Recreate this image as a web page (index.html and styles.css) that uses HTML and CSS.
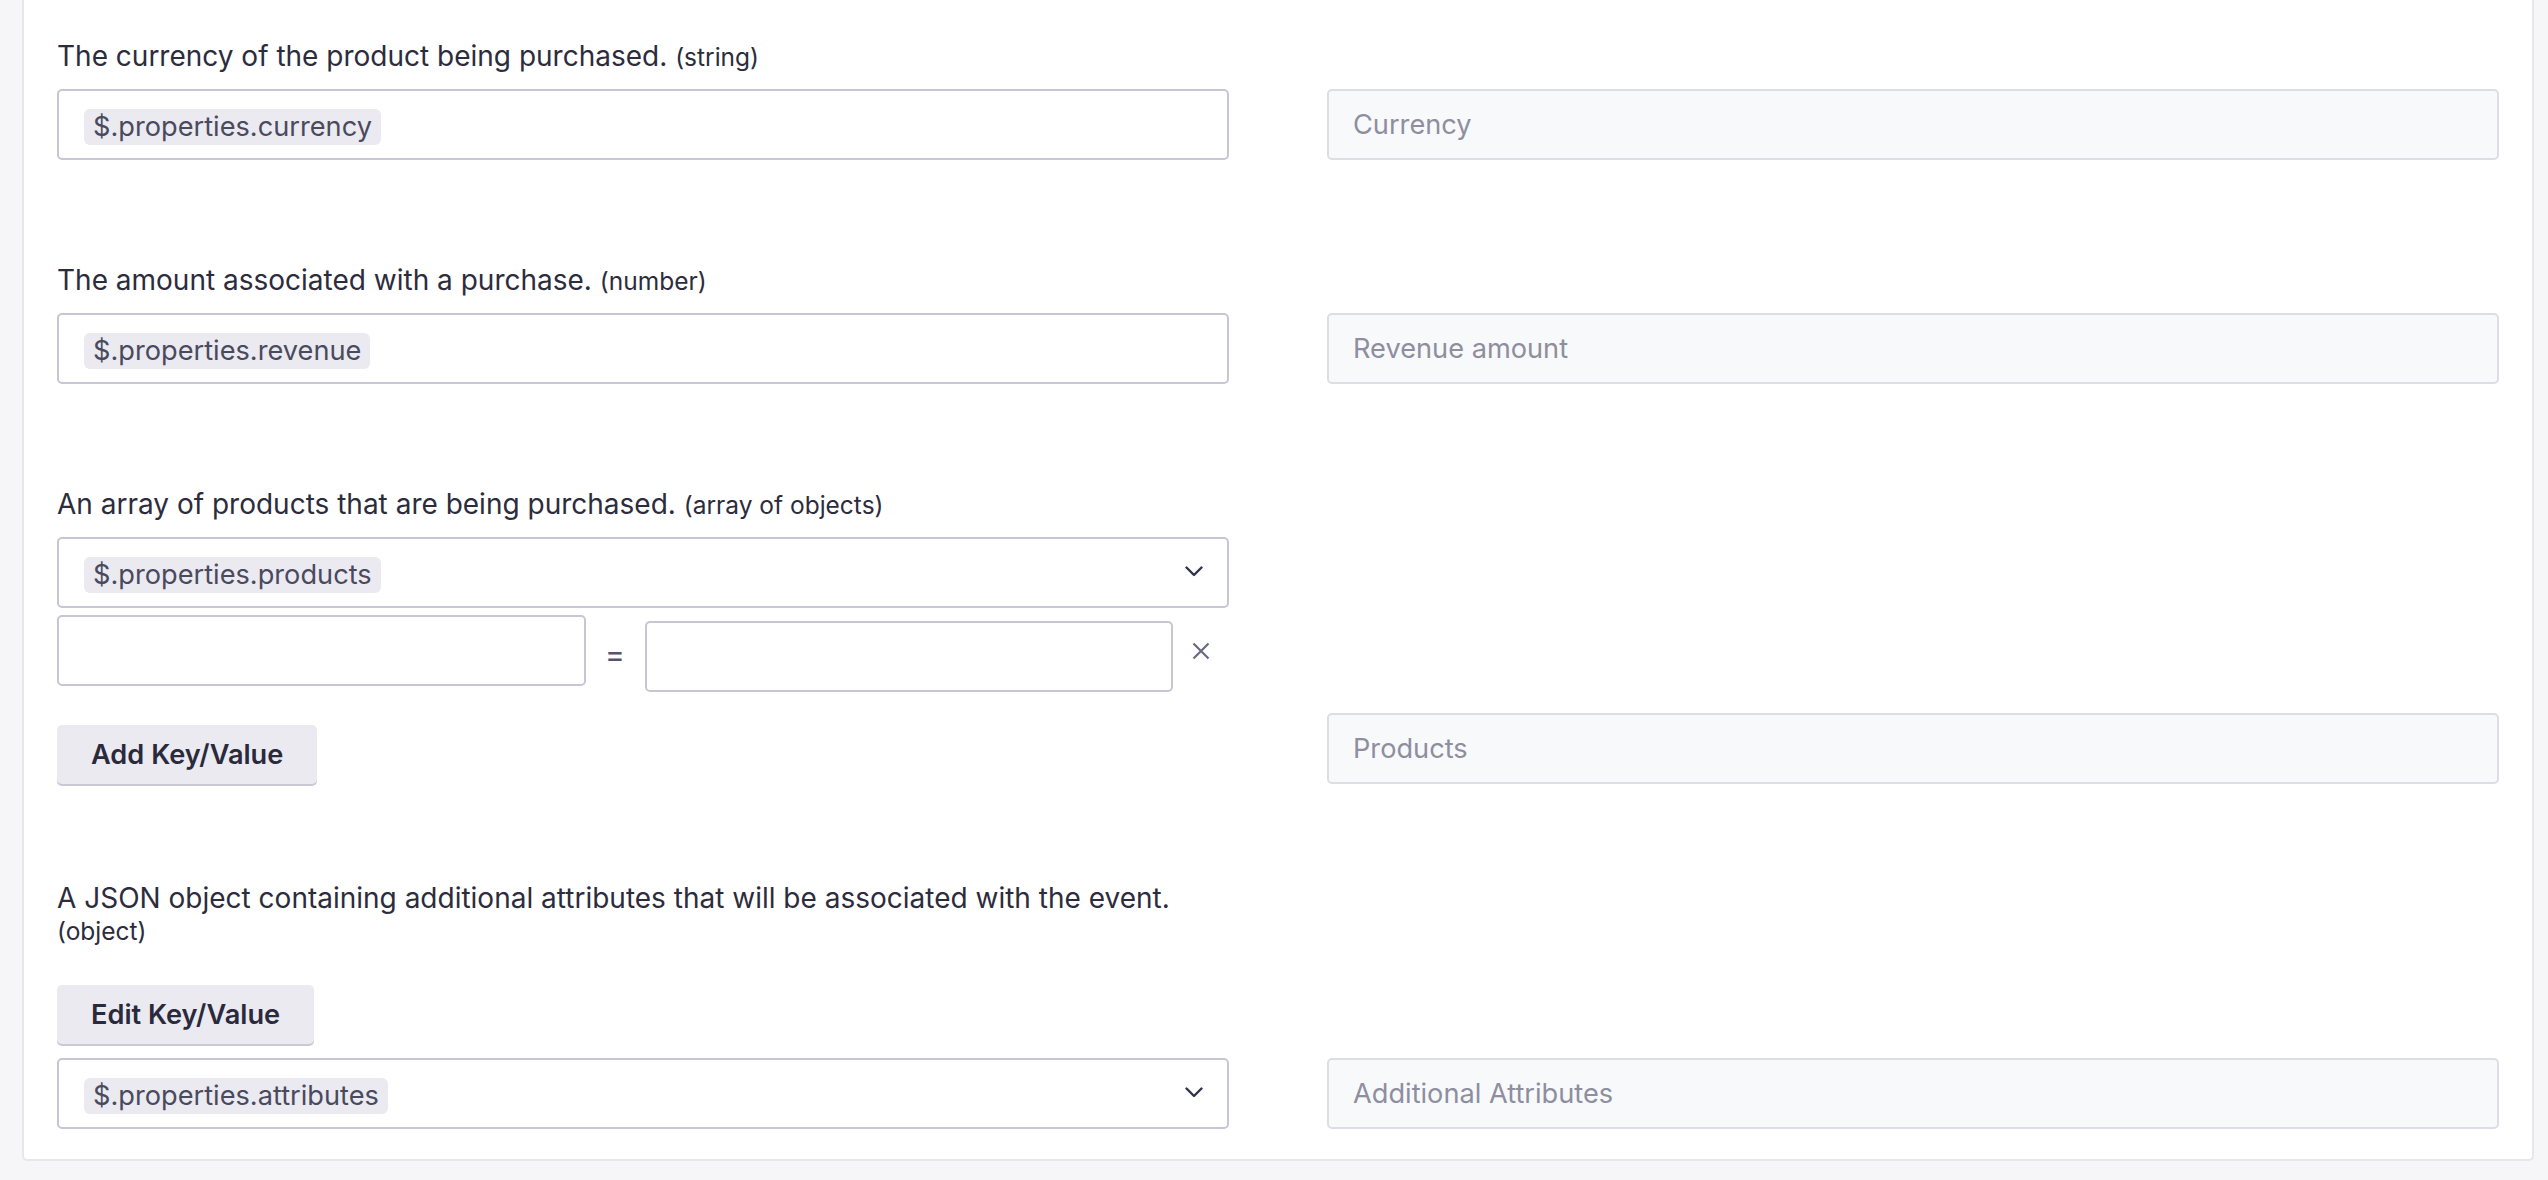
FILE: index.html
```html
<!DOCTYPE html>
<html lang="en">
<head>
<meta charset="utf-8">
<title>Mapping</title>
<link rel="stylesheet" href="styles.css">
</head>
<body>
<div class="panel">
  <div class="field">
    <div class="col">
      <div class="label">The currency of the product being purchased. <span class="type">(string)</span></div>
      <div class="input"><span class="pill">$.properties.currency</span></div>
    </div>
    <div class="col">
      <div class="ro">Currency</div>
    </div>
  </div>

  <div class="field">
    <div class="col">
      <div class="label">The amount associated with a purchase. <span class="type">(number)</span></div>
      <div class="input"><span class="pill">$.properties.revenue</span></div>
    </div>
    <div class="col">
      <div class="ro">Revenue amount</div>
    </div>
  </div>

  <div class="field">
    <div class="col">
      <div class="label">An array of products that are being purchased. <span class="type">(array of objects)</span></div>
      <div class="input select"><span class="pill">$.properties.products</span>
        <svg class="chev" width="18" height="11" viewBox="0 0 18 11"><path d="M1.5 1.5 L9 9 L16.5 1.5" fill="none" stroke="#32324d" stroke-width="2.4" stroke-linecap="round" stroke-linejoin="round"/></svg>
      </div>
      <div class="kv">
        <div class="input kv-key"></div>
        <span class="eq">=</span>
        <div class="input kv-val"></div>
        <svg class="close" width="18" height="18" viewBox="0 0 18 18"><path d="M1.5 1.5 L16.5 16.5 M16.5 1.5 L1.5 16.5" fill="none" stroke="#6a6a80" stroke-width="2.2"/></svg>
      </div>
      <button class="btn btn-add">Add Key/Value</button>
    </div>
    <div class="col">
      <div class="ro">Products</div>
    </div>
  </div>

  <div class="field field-last">
    <div class="col">
      <div class="label">A JSON object containing additional attributes that will be associated with the event. <span class="type type-wrap">(object)</span></div>
      <button class="btn btn-edit">Edit Key/Value</button>
      <div class="input select select-attr"><span class="pill">$.properties.attributes</span>
        <svg class="chev" width="18" height="11" viewBox="0 0 18 11"><path d="M1.5 1.5 L9 9 L16.5 1.5" fill="none" stroke="#32324d" stroke-width="2.4" stroke-linecap="round" stroke-linejoin="round"/></svg>
      </div>
    </div>
    <div class="col">
      <div class="ro">Additional Attributes</div>
    </div>
  </div>
</div>
</body>
</html>
```

FILE: styles.css
```css
* { box-sizing: border-box; }

html, body {
  margin: 0;
  padding: 0;
}

body {
  background: #f6f6f9;
  height: 1180px;
  overflow: hidden;
  font-family: Inter, "Noto Sans", "Liberation Sans", sans-serif;
  color: #2c2c3d;
}

.panel {
  margin-left: 22px;
  width: 2512px;
  background: #ffffff;
  border: 2px solid #e6e6ec;
  border-top: none;
  border-radius: 0 0 5px 5px;
  padding: 40px 33px 30px 33px;
  display: flex;
  flex-direction: column;
  gap: 104px;
}

.field {
  display: grid;
  grid-template-columns: 1fr 1fr;
  column-gap: 98px;
  align-items: end;
}

.field-last {
  margin-top: -6px;
}

.col {
  display: flex;
  flex-direction: column;
  min-width: 0;
}

.label {
  font-size: 28px;
  line-height: 33px;
  color: #2c2c3d;
  margin-bottom: 16px;
}

.type {
  font-size: 24.5px;
  line-height: 20px;
}

.type-wrap {
  display: block;
  line-height: 33px;
}

.input {
  height: 71px;
  border: 2px solid #c7c6d5;
  border-radius: 5px;
  background: #ffffff;
  display: flex;
  align-items: center;
  padding-left: 25px;
  position: relative;
}

.pill {
  display: inline-block;
  background: #eaeaf0;
  border-radius: 6px;
  height: 36px;
  line-height: 36px;
  padding: 0 9px;
  font-size: 27.2px;
  color: #4a4a5f;
  margin-top: 5px;
}

.select {
  padding-right: 24px;
  justify-content: space-between;
}

.chev {
  margin-top: -3px;
}

.kv {
  display: flex;
  align-items: center;
  margin-top: 7px;
}

.kv-key {
  flex: 1;
  margin-bottom: 6px;
}

.kv-val {
  flex: 1;
  margin-top: 6px;
}

.eq {
  width: 59px;
  text-align: center;
  font-size: 30px;
  color: #55556a;
  line-height: 1;
}

.close {
  margin-left: 19px;
  margin-right: 19px;
  margin-bottom: 5px;
}

.btn {
  align-self: flex-start;
  height: 59px;
  padding: 0 34px;
  border: none;
  border-radius: 5px;
  background: #eaeaf0;
  box-shadow: 0 2px 0 #c9c9d5;
  font-family: Inter, "Noto Sans", "Liberation Sans", sans-serif;
  font-size: 27.2px;
  font-weight: 600;
  color: #2a2a3c;
}

.btn-add {
  margin-top: 33px;
}

.btn-edit {
  margin-top: 21px;
}

.select-attr {
  margin-top: 14px;
}

.ro {
  height: 71px;
  border: 2px solid #dddde5;
  border-radius: 5px;
  background: #f8f9fb;
  display: flex;
  align-items: center;
  padding-left: 24px;
  font-size: 27.2px;
  color: #8e8e9f;
}
```
